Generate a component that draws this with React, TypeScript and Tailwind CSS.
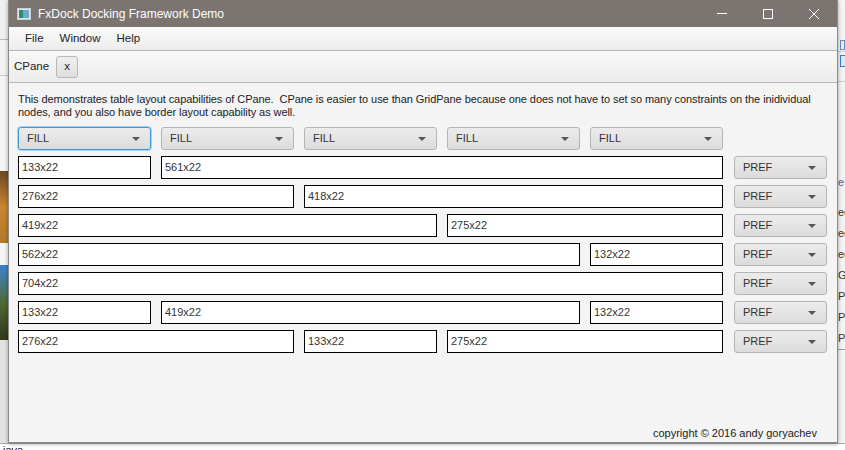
import React from 'react';

const COL = 'w-[133px]';

type Cell = { label: string; span: number };

const ROWS: Cell[][] = [
  [{ label: '133x22', span: 1 }, { label: '561x22', span: 4 }],
  [{ label: '276x22', span: 2 }, { label: '418x22', span: 3 }],
  [{ label: '419x22', span: 3 }, { label: '275x22', span: 2 }],
  [{ label: '562x22', span: 4 }, { label: '132x22', span: 1 }],
  [{ label: '704x22', span: 5 }],
  [{ label: '133x22', span: 1 }, { label: '419x22', span: 3 }, { label: '132x22', span: 1 }],
  [{ label: '276x22', span: 2 }, { label: '133x22', span: 1 }, { label: '275x22', span: 2 }],
];

const SPAN: Record<number, string> = {
  1: 'col-span-1',
  2: 'col-span-2',
  3: 'col-span-3',
  4: 'col-span-4',
  5: 'col-span-5',
};

const Arrow = () => (
  <svg width="8" height="4" viewBox="0 0 8 4" className="shrink-0">
    <path d="M0 0h8L4 4z" fill="#555" />
  </svg>
);

const Combo: React.FC<{ label: string; focused?: boolean; className?: string }> = ({ label, focused, className }) => (
  <div
    className={`h-[23px] flex items-center justify-between pl-[8px] pr-[10px] rounded-[3px] bg-gradient-to-b from-[#ececec] to-[#dcdcdc] text-[#333] ${
      focused ? 'border border-[#3a9ad9] shadow-[0_0_0_1px_#a8d4f1]' : 'border border-[#b4b4b4]'
    } ${className ?? ''}`}
  >
    <span>{label}</span>
    <Arrow />
  </div>
);

const Field: React.FC<{ label: string; span: number }> = ({ label, span }) => (
  <div className={`${SPAN[span]} h-[23px] bg-white border-[1.5px] border-black flex items-center pl-[3px] text-[#333]`}>
    {label}
  </div>
);

export default function App() {
  return (
    <div
      className="w-[845px] h-[450px] bg-[#e9e9e9] relative overflow-hidden text-[11px]"
      style={{ fontFamily: '"Liberation Sans", Arial, sans-serif' }}
    >
      {/* desktop behind the window */}
      <div className="absolute left-0 top-0 w-[8px] h-[450px] flex flex-col">
        <div className="h-[40px] border-b border-[#b9b9b9] bg-[#f0f0f0]" />
        <div className="h-[36px] border-b border-[#c9c9c9] bg-[#f3f3f3]" />
        <div className="h-[95px] bg-[#f5f5f5]" />
        <div className="h-[72px] bg-gradient-to-b from-[#6b4a22] via-[#c9852c] to-[#b27a2a]" />
        <div className="h-[22px] bg-[#f5f5f5]" />
        <div className="h-[75px] bg-gradient-to-b from-[#3b7fd1] via-[#4f6a32] to-[#2f3a1c]" />
        <div className="flex-1 bg-[#e3e3e3]" />
      </div>
      <div className="absolute right-0 top-0 w-[8px] h-[450px] bg-[#f4f4f4] border-l border-[#cfcfcf] flex flex-col text-[11px] text-[#333] leading-[21px] whitespace-nowrap">
        <div className="h-[52px] border-b border-[#ccc] flex items-end pl-[2px] pb-[1px]">
          <div className="w-[6px] h-[10px] border border-[#6a8bbd] bg-[#e8eef6]" />
        </div>
        <div className="h-[30px] border-b border-[#ccc] pl-[2px] pt-[3px]">
          <div className="w-[6px] h-[12px] border border-[#3b7fd1] bg-[#dfe8f5]" />
        </div>
        <div className="h-[90px]" />
        <div className="text-[#3a62a8]">e</div>
        <div className="h-[9px]" />
        <div>ec</div>
        <div>ec</div>
        <div>ec</div>
        <div>Ga</div>
        <div>Pi</div>
        <div>Pl</div>
        <div className="border-b border-[#999]">Pu</div>
      </div>
      <div className="absolute left-0 top-[443px] w-[845px] h-[7px] bg-white border-t border-[#aaa] text-[11px] leading-[12px] pl-[3px] text-[#222]">
        java
      </div>

      {/* window */}
      <div className="absolute left-[8px] top-0 w-[830px] h-[443px] flex flex-col border-x border-b border-[#8a8a8a] shadow-[0_1px_4px_rgba(0,0,0,0.35)] bg-[#f4f4f4]">
        <div className="h-[27px] bg-[#7b7471] flex items-center shrink-0">
          <svg width="14" height="12" viewBox="0 0 14 12" className="ml-[8px] mr-[7px]">
            <rect x="0.5" y="0.5" width="13" height="11" fill="#dfe7ea" stroke="#c8d0d2" />
            <rect x="2" y="2" width="4" height="8" fill="#2e8c72" />
            <rect x="6" y="2" width="6" height="8" fill="#6ea8c8" />
          </svg>
          <span className="text-white text-[12px]">FxDock Docking Framework Demo</span>
          <div className="ml-auto flex items-center h-full text-white">
            <div className="w-[46px] h-full flex items-center justify-center">
              <div className="w-[10px] h-px bg-white" />
            </div>
            <div className="w-[46px] h-full flex items-center justify-center">
              <div className="w-[10px] h-[10px] border border-white" />
            </div>
            <div className="w-[46px] h-full flex items-center justify-center">
              <svg width="10" height="10" viewBox="0 0 10 10">
                <path d="M0 0L10 10M10 0L0 10" stroke="white" strokeWidth="1" />
              </svg>
            </div>
          </div>
        </div>

        <div className="h-[24px] shrink-0 bg-gradient-to-b from-[#fbfbfb] to-[#ececec] border-b border-[#b8b8b8] flex items-center pl-[16px] gap-[16px] text-[#222] text-[11.5px]">
          <span>File</span>
          <span>Window</span>
          <span>Help</span>
        </div>

        <div className="h-[32px] shrink-0 bg-gradient-to-b from-[#f8f8f8] to-[#ececec] border-b border-[#b8b8b8] flex items-center pl-[5px] gap-[7px] text-[#222] text-[11.5px]">
          <span>CPane</span>
          <div className="w-[22px] h-[22px] rounded-[3px] border border-[#b8b8b8] bg-gradient-to-b from-[#efefef] to-[#dedede] flex items-center justify-center">
            x
          </div>
        </div>

        <div className="flex-1 flex flex-col px-[9px] pt-[10px] pb-0">
          <p className="text-[#222] leading-[13px] tracking-[-0.07px]">
            This demonstrates table layout capabilities of CPane.&nbsp; CPane is easier to use than GridPane because one does not have to set so many constraints on the inidividual nodes, and you also have border layout capability as well.
          </p>

          <div className="grid grid-cols-[133px_133px_133px_133px_133px_94px] gap-x-[10px] gap-y-[6px] mt-[8px]">
            <Combo label="FILL" focused className={COL} />
            <Combo label="FILL" className={COL} />
            <Combo label="FILL" className={COL} />
            <Combo label="FILL" className={COL} />
            <Combo label="FILL" className={COL} />
            <div />
            {ROWS.map((row, i) => (
              <React.Fragment key={i}>
                {row.map((c, j) => (
                  <Field key={j} label={c.label} span={c.span} />
                ))}
                <Combo label="PREF" className="col-start-6 ml-px" />
              </React.Fragment>
            ))}
          </div>

          <div className="mt-auto self-end pr-[11px] pb-[1px] text-[#222]">copyright © 2016 andy goryachev</div>
        </div>
      </div>
    </div>
  );
}
